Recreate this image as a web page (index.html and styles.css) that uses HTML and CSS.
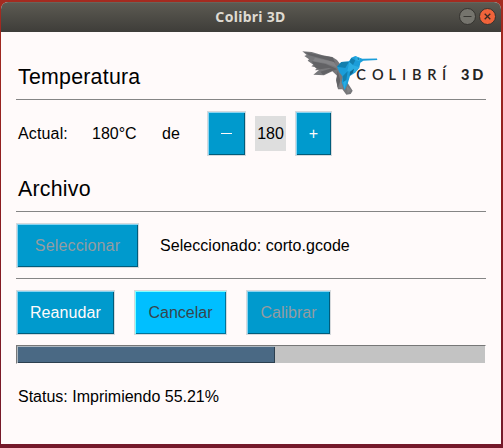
FILE: index.html
```
<!DOCTYPE html>
<html lang="es">
<head>
<meta charset="utf-8">
<title>Colibri 3D</title>
<link rel="stylesheet" href="styles.css">
</head>
<body>
<div class="window">
  <header class="titlebar">
    <span class="title">Colibri 3D</span>
    <div class="controls">
      <svg width="17" height="17" viewBox="0 0 17 17"><circle cx="8.5" cy="8.5" r="8" fill="#75746d" stroke="#34332f"/><path d="M4.5 8.5h8" stroke="#383733"/></svg>
      <svg width="17" height="17" viewBox="0 0 17 17"><circle cx="8.5" cy="8.5" r="8" fill="#f0633a" stroke="#34332f"/><path d="M5.7 5.7l5.6 5.6M11.3 5.7l-5.6 5.6" stroke="#3b2a22" stroke-width="1.3"/></svg>
    </div>
  </header>
  <main class="content">
    <section class="head temp-head">
      <h2>Temperatura</h2>
      <svg class="logo" width="184" height="48" viewBox="302 49 184 48">
        <g transform="translate(295 40) scale(.33333)">
          <path fill="#77777a" d="M22 34L50 36L83 46L112 51L126 60L138 76L145 112L160 132L173 152L167 162L154 164L142 148L129 148L123 121L127 108L112 94L87 106L55 104L72 90L60 91L66 83L49 79L55 74L38 62L42 58L28 48L35 45Z"/>
          <path fill="#626265" d="M28 36L83 47L112 52L121 68L99 61L77 55L42 46ZM50 64L92 72L125 86L100 84L75 88L62 84ZM76 95L113 84L127 88L108 94L84 104ZM128 92L136 122L128 143L124 118Z"/>
          <path fill="#838386" d="M60 53L116 66L126 82L92 70L54 63ZM137 118L144 147L132 144ZM155 138L169 151L158 160Z"/>
          <path fill="#1b9dd9" d="M126 80L139 66L162 64L169 53L181 48L194 53L202 56L246 55.5L247 60L205 62L196 68L193 83L180 98L165 108L158 131L149 151L140 127L143 110L133 97Z"/>
          <path fill="#137fae" d="M139 66L162 65L151 84L126 80ZM143 109L158 94L154 120L145 126ZM169 54L181 61L174 75L163 66Z"/>
          <path fill="#2bade2" d="M163 66L174 76L193 82L180 98L157 93ZM181 49L195 55L194 64L181 61ZM145 127L155 120L148 149Z"/>
          <path fill="#0f668d" d="M165 95L177 86L174 98L164 107ZM187 56L192 55L191 60Z"/>
        </g>
        <text class="brand" y="80" x="356.3 372 388.5 402 412 427.3 442">COLIBRÍ</text>
        <text class="brand brand-bold" y="80" x="461 472.2">3D</text>
      </svg>
    </section>
    <section class="temp-row">
      <span class="actual">Actual:</span><span class="reading">180°C</span><span class="of">de</span>
      <button class="btn minus"><svg width="11" height="3" viewBox="0 0 11 3"><path d="M0 1.5h11" stroke="#fffafa"/></svg></button>
      <span class="target">180</span>
      <button class="btn plus">+</button>
    </section>
    <section class="head file-head"><h2>Archivo</h2></section>
    <section class="file-row">
      <button class="btn select" disabled>Seleccionar</button>
      <span class="selected">Seleccionado: corto.gcode</span>
    </section>
    <section class="actions">
      <button class="btn resume">Reanudar</button>
      <button class="btn cancel">Cancelar</button>
      <button class="btn calibrate" disabled>Calibrar</button>
    </section>
    <div class="progress"><div class="fill" style="width:55.21%"></div></div>
    <p class="status">Status: Imprimiendo 55.21%</p>
  </main>
</div>
</body>
</html>
```
FILE: styles.css
```
* { box-sizing: border-box; }
body {
  margin: 0;
  width: 503px;
  height: 448px;
  padding: 2px 2px 4px 1px;
  overflow: hidden;
  background: linear-gradient(to bottom, #a42b20, #8c1c20 45%, #74192a);
  font: 16px "Liberation Sans", Arial, sans-serif;
  color: #000;
}
.window { height: 442px; border-radius: 7px 7px 0 0; overflow: hidden; background: #fffafa; }
.titlebar {
  display: grid;
  grid-template-columns: 1fr auto 1fr;
  align-items: center;
  height: 30px;
  padding-right: 5px;
  background: linear-gradient(#5c5a52, #3e3d39);
  border-top: 1px solid #66645b;
}
.title { grid-column: 2; font: bold 14px/20px "Noto Sans", sans-serif; letter-spacing: .3px; color: #dfdbd2; padding-left: 4px; position: relative; top: -1px; }
.controls { display: flex; justify-content: flex-end; gap: 3px; position: relative; top: -1px; }
.content { padding: 0 15px; }
.head { display: flex; justify-content: space-between; border-bottom: 1px solid #858585; }
h2 { margin: 0; padding-left: 2px; font-size: 21.33px; font-weight: 400; line-height: 24px; letter-spacing: .25px; }
.temp-head { height: 68px; }
.temp-head h2 { padding-top: 33px; }
.logo { margin-top: 17px; }
.brand { font: 600 14.5px Lato, sans-serif; fill: #242424; }
.brand-bold { font-weight: 900; }
.temp-row { display: flex; align-items: center; height: 67px; padding-left: 2px; }
.actual { width: 74px; letter-spacing: .15px; }
.reading { width: 70px; }
.of { width: 45px; }
.btn {
  height: 45px;
  padding: 0;
  border: 1px solid #d6d9dc;
  background: #009acd;
  box-shadow: inset 1px 1px #88d4f1, inset -1px -1px #005c7b;
  color: #fffafa;
  font: inherit;
}
.btn:disabled { color: #949ca1; }
.minus { display: flex; align-items: center; justify-content: center; width: 39px; }
.plus { width: 37px; }
.target { width: 31px; height: 35px; margin: 0 9px; background: #dedede; line-height: 35px; text-align: center; }
.file-head { height: 45px; }
.file-head h2 { padding-top: 10px; }
.file-row { display: flex; align-items: center; gap: 21px; height: 67px; border-bottom: 1px solid #858585; }
.select { width: 123px; padding-top: 1px; letter-spacing: .15px; }
.selected { padding-top: 2px; letter-spacing: .05px; }
.actions { display: flex; align-items: center; gap: 19px; height: 66px; padding-top: 1px; }
.resume { width: 99px; letter-spacing: .1px; }
.cancel { width: 93px; background: #00bfff; color: #36454d; box-shadow: inset 1px 1px #80ffff, inset -1px -1px #007399; }
.calibrate { width: 85px; }
.progress { height: 19px; border: 1px solid #fffafa; border-top-color: #777; border-left-color: #777; background: #c3c3c3; }
.fill { height: 17px; background: #4a6984; box-shadow: inset 1px 1px #aeb8c0, inset -1px -1px #2c3f4f; }
.status { margin: 24px 0 0 2px; line-height: 18px; }
```
